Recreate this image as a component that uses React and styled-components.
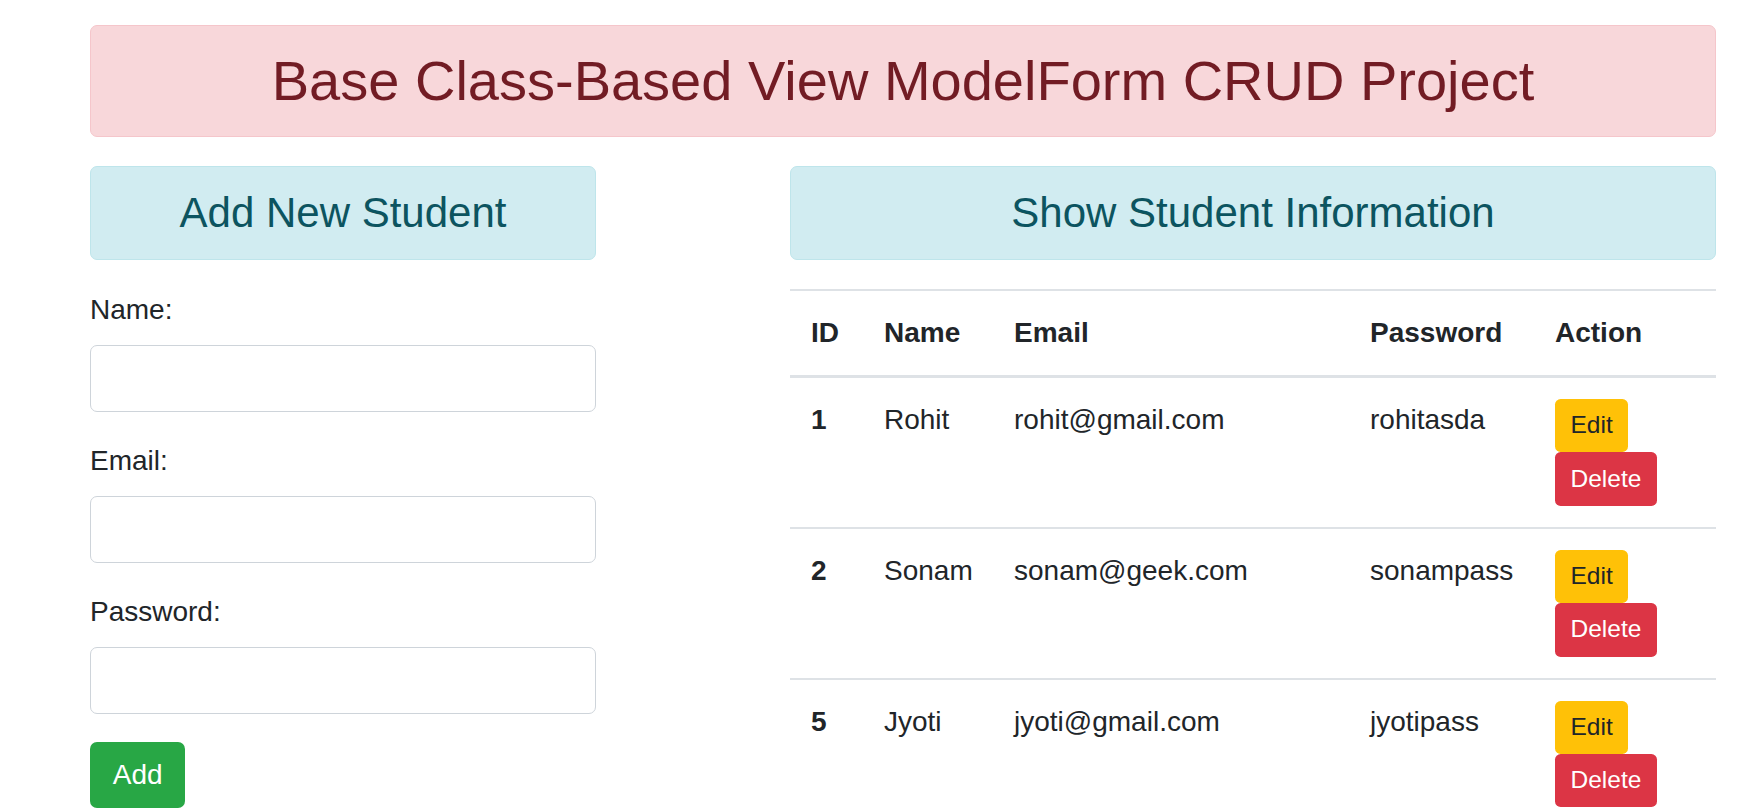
import React from 'react';
import styled, { createGlobalStyle } from 'styled-components';

const GlobalStyle = createGlobalStyle`
    * {
        box-sizing: border-box;
    }
    body {
        margin: 0;
        background: #fff;
        color: #212529;
        font-family: "Liberation Sans", Arial, sans-serif;
        font-size: 28px;
        line-height: 1.5;
    }
`;

const Container = styled.div`
    width: 1626px;
    margin-left: 90px;
    padding-top: 25px;
`;

const Banner = styled.h2`
    margin: 0 0 29px;
    padding: 21px 35px;
    background: #f8d7da;
    border: 1px solid #f5c6cb;
    border-radius: 7px;
    color: #721c24;
    font-size: 56px;
    font-weight: 400;
    line-height: 68px;
    text-align: center;
`;

const Row = styled.div`
    display: flex;
    justify-content: space-between;
    align-items: flex-start;
`;

const Column = styled.div`
    width: ${(p) => p.$width}px;
`;

const SectionTitle = styled.h4`
    margin: 0 0 29px;
    padding: 21px 20px;
    background: #d1ecf1;
    border: 1px solid #bee5eb;
    border-radius: 7px;
    color: #0c5460;
    font-size: 42px;
    font-weight: 400;
    line-height: 50px;
    text-align: center;
`;

const FormGroup = styled.div`
    margin-bottom: 28px;
`;

const Label = styled.label`
    display: block;
    margin-bottom: 14px;
    line-height: 42px;
`;

const Input = styled.input`
    display: block;
    width: 100%;
    height: 67px;
    padding: 0 21px;
    border: 1px solid #ced4da;
    border-radius: 7px;
    font: inherit;
    color: #495057;
    background: #fff;
`;

const Button = styled.button`
    display: inline-flex;
    align-items: center;
    justify-content: center;
    height: ${(p) => (p.$small ? 53.4 : 66)}px;
    padding: 0 ${(p) => (p.$small ? 15.5 : 22.75)}px;
    border: none;
    border-radius: ${(p) => (p.$small ? 5.6 : 7)}px;
    background: ${(p) => p.$bg};
    color: ${(p) => p.$color};
    font-family: inherit;
    font-size: ${(p) => (p.$small ? 24.5 : 28)}px;
    line-height: 1.5;
    cursor: pointer;
`;

const Table = styled.table`
    width: 100%;
    border-collapse: collapse;
    table-layout: fixed;
`;

const Th = styled.th`
    padding: 21px;
    text-align: left;
    vertical-align: bottom;
    font-weight: 700;
    line-height: 42px;
    border-top: 2px solid #dee2e6;
    border-bottom: 3px solid #dee2e6;
`;

const Td = styled.td`
    padding: 21px;
    vertical-align: top;
    line-height: 42px;
    border-top: 2px solid #dee2e6;
    font-weight: ${(p) => (p.$bold ? 700 : 400)};
`;

const Actions = styled.div`
    display: flex;
    flex-direction: column;
    align-items: flex-start;
`;

const columns = [
    { label: 'ID', width: 73 },
    { label: 'Name', width: 130 },
    { label: 'Email', width: 356 },
    { label: 'Password', width: 185 },
    { label: 'Action', width: 182 },
];

const students = [
    { id: 1, name: 'Rohit', email: 'rohit@gmail.com', password: 'rohitasda' },
    { id: 2, name: 'Sonam', email: 'sonam@geek.com', password: 'sonampass' },
    { id: 5, name: 'Jyoti', email: 'jyoti@gmail.com', password: 'jyotipass' },
];

const App = () => {
    return (
        <>
            <GlobalStyle />
            <Container>
                <Banner>Base Class-Based View ModelForm CRUD Project</Banner>
                <Row>
                    <Column $width={506}>
                        <SectionTitle>Add New Student</SectionTitle>
                        <form onSubmit={(e) => e.preventDefault()}>
                            <FormGroup>
                                <Label htmlFor="name">Name:</Label>
                                <Input id="name" type="text" />
                            </FormGroup>
                            <FormGroup>
                                <Label htmlFor="email">Email:</Label>
                                <Input id="email" type="email" />
                            </FormGroup>
                            <FormGroup>
                                <Label htmlFor="password">Password:</Label>
                                <Input id="password" type="password" />
                            </FormGroup>
                            <Button type="submit" $bg="#28a745" $color="#fff">Add</Button>
                        </form>
                    </Column>
                    <Column $width={926}>
                        <SectionTitle>Show Student Information</SectionTitle>
                        <Table>
                            <colgroup>
                                {columns.map((c) => (
                                    <col key={c.label} style={{ width: c.width }} />
                                ))}
                            </colgroup>
                            <thead>
                                <tr>
                                    {columns.map((c) => (
                                        <Th key={c.label}>{c.label}</Th>
                                    ))}
                                </tr>
                            </thead>
                            <tbody>
                                {students.map((s) => (
                                    <tr key={s.id}>
                                        <Td $bold>{s.id}</Td>
                                        <Td>{s.name}</Td>
                                        <Td>{s.email}</Td>
                                        <Td>{s.password}</Td>
                                        <Td>
                                            <Actions>
                                                <Button $small $bg="#ffc107" $color="#212529">Edit</Button>
                                                <Button $small $bg="#dc3545" $color="#fff">Delete</Button>
                                            </Actions>
                                        </Td>
                                    </tr>
                                ))}
                            </tbody>
                        </Table>
                    </Column>
                </Row>
            </Container>
        </>
    );
};

export default App;
